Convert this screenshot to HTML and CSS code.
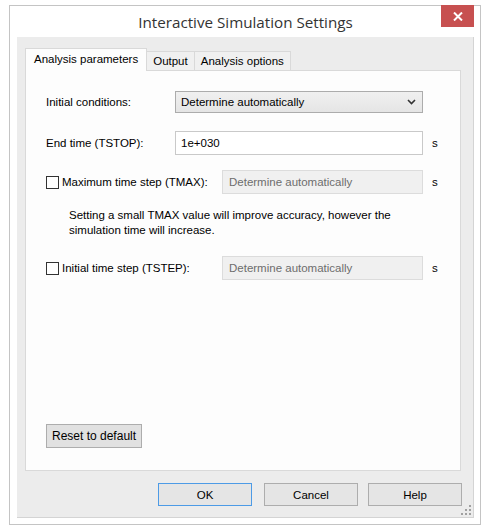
FILE: index.html
```html
<!DOCTYPE html>
<html>
<head>
<meta charset="utf-8">
<link rel="stylesheet" href="styles.css">
</head>
<body>
<div class="window">
  <div class="titlebar">
    <div class="title">Interactive Simulation Settings</div>
    <div class="close"><svg width="10" height="9" viewBox="0 0 10 9"><path d="M1 0.5 L9 8.5 M9 0.5 L1 8.5" stroke="#fff" stroke-width="2"/></svg></div>
  </div>
  <div class="client">
    <div class="tabs">
      <div class="tab active">Analysis parameters</div>
      <div class="tab">Output</div>
      <div class="tab">Analysis options</div>
    </div>
    <div class="panel">
      <div class="row row1">
        <span class="lbl">Initial conditions:</span>
        <div class="select"><span>Determine automatically</span><svg width="9" height="6" viewBox="0 0 9 6"><path d="M1 1 L4.5 4.5 L8 1" stroke="#333" stroke-width="1.6" fill="none"/></svg></div>
      </div>
      <div class="row row2">
        <span class="lbl">End time (TSTOP):</span>
        <div class="input">1e+030</div>
        <span class="unit">s</span>
      </div>
      <div class="row rowc row3">
        <span class="chk"><span class="box"></span>Maximum time step (TMAX):</span>
        <div class="input disabled">Determine automatically</div>
        <span class="unit">s</span>
      </div>
      <p class="note">Setting a small TMAX value will improve accuracy, however the simulation time will increase.</p>
      <div class="row rowc row4">
        <span class="chk"><span class="box"></span>Initial time step (TSTEP):</span>
        <div class="input disabled">Determine automatically</div>
        <span class="unit">s</span>
      </div>
      <div class="spacer"></div>
      <div class="reset">Reset to default</div>
    </div>
    <div class="buttons">
      <div class="btn ok">OK</div>
      <div class="btn cancel">Cancel</div>
      <div class="btn help">Help</div>
    </div>
    <div class="grip">
      <svg width="10" height="10" viewBox="0 0 10 10" fill="#a0a0a0"><rect x="8" y="0" width="2" height="2"/><rect x="4" y="4" width="2" height="2"/><rect x="8" y="4" width="2" height="2"/><rect x="0" y="8" width="2" height="2"/><rect x="4" y="8" width="2" height="2"/><rect x="8" y="8" width="2" height="2"/></svg>
    </div>
  </div>
</div>
</body>
</html>
```

FILE: styles.css
```css
* { box-sizing: border-box; }
html, body { margin: 0; padding: 0; background: #fff; }
body {
  padding: 5px 0 0 9px;
  font-family: "Liberation Sans", Arial, sans-serif;
  font-size: 11.5px;
  color: #000;
}
.window {
  width: 472px;
  height: 520px;
  border: 1px solid #c4c4c4;
  background: #fff;
  display: flex;
  flex-direction: column;
  padding: 0 6px 0 7px;
}
.titlebar {
  height: 31px;
  position: relative;
  display: flex;
  align-items: center;
  justify-content: center;
}
.title {
  font-family: "Open Sans", "Noto Sans", sans-serif;
  font-size: 15.2px;
  color: #333;
}
.close {
  position: absolute;
  top: -1px;
  right: 0px;
  width: 33px;
  height: 22px;
  background: #c75050;
  display: flex;
  align-items: center;
  justify-content: center;
}
.client {
  position: relative;
  width: 457px;
  height: 481px;
  background: #ececec;
  border-right: 1px solid #d4d4d4;
  border-bottom: 1px solid #d4d4d4;
  padding: 11px 0 0 8px;
  display: flex;
  flex-direction: column;
}
.tabs {
  display: flex;
  align-items: flex-end;
  height: 22px;
  position: relative;
  z-index: 1;
}
.tab {
  height: 19px;
  padding: 0 6px;
  border: 1px solid #d9d9d9;
  border-bottom: none;
  background: #f0f0f0;
  line-height: 18px;
  margin-left: -1px;
}
.tab:first-child { margin-left: 0; }
.tab.active {
  height: 23px;
  margin-bottom: -1px;
  background: #fdfdfd;
  padding: 0 8px;
  line-height: 20px;
}
.panel {
  width: 436px;
  height: 401px;
  background: #fdfdfd;
  border: 1px solid #d9d9d9;
  padding: 20px 0 22px 19px;
  display: flex;
  flex-direction: column;
}
.row {
  display: grid;
  grid-template-columns: 121px 248px auto;
  align-items: center;
  column-gap: 9px;
}
.rowc { grid-template-columns: 168px 201px auto; }
.row2 { margin-top: 18px; }
.row3 { margin-top: 15px; }
.lbl { padding-left: 1px; }
.select {
  height: 22px;
  border: 1px solid #acacac;
  background: linear-gradient(#f0f0f0, #e5e5e5);
  display: flex;
  align-items: center;
  justify-content: space-between;
  padding: 0 6px 0 5px;
}
.input {
  height: 24px;
  border: 1px solid #c9c9c9;
  background: #fff;
  display: flex;
  align-items: center;
  padding-left: 5px;
}
.input.disabled {
  background: #f0f0f0;
  border-color: #dcdcdc;
  color: #6d6d6d;
  padding-left: 6px;
}
.chk {
  display: flex;
  align-items: center;
  padding-left: 1px;
  white-space: nowrap;
}
.box {
  width: 13px;
  height: 13px;
  border: 1px solid #333;
  background: #fff;
  margin-right: 3px;
  flex: none;
}
.note {
  margin: 14px 0 0 24px;
  width: 370px;
  line-height: 15px;
}
.row4 { margin-top: 18px; }
.spacer { flex: 1; }
.reset {
  align-self: flex-start;
  margin-left: 1px;
  height: 24px;
  padding: 0 5px;
  border: 1px solid #adadad;
  background: #e1e1e1;
  display: flex;
  align-items: center;
  font-size: 12px;
}
.buttons {
  display: flex;
  margin-top: 12px;
  padding-left: 133px;
}
.btn {
  width: 94px;
  height: 23px;
  border: 1px solid #adadad;
  background: #e5e5e5;
  display: flex;
  align-items: center;
  justify-content: center;
}
.btn.ok { border-color: #4d9be6; }
.btn.cancel { margin-left: 12px; }
.btn.help { margin-left: 10px; }
.grip {
  position: absolute;
  right: 2px;
  bottom: 2px;
  line-height: 0;
}
```
